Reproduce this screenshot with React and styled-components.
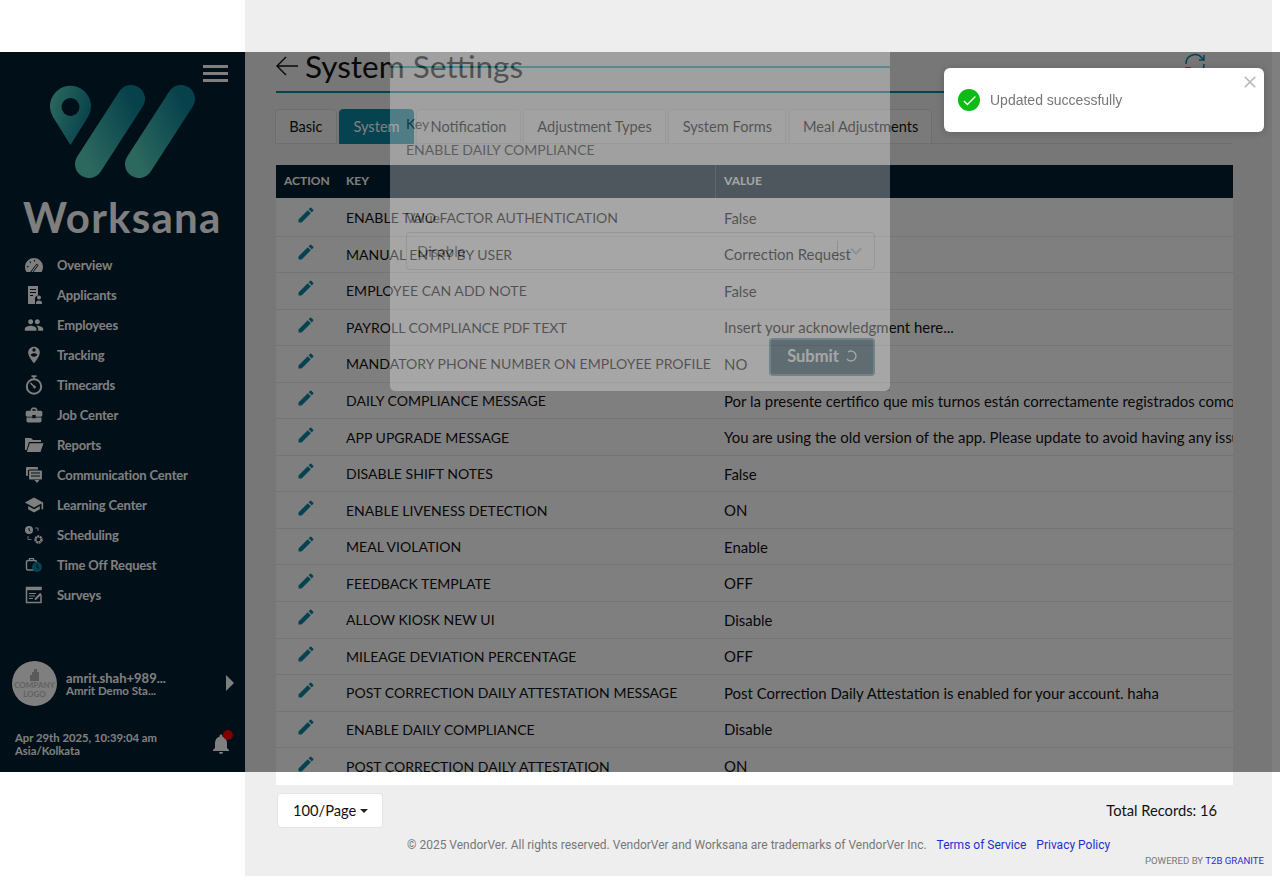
import React from 'react';
import styled, { createGlobalStyle } from 'styled-components';
import {
  MdPeople, MdPersonPinCircle, MdBusinessCenter, MdSchool, MdEdit, MdNotifications, MdCheck, MdClose,
} from 'react-icons/md';

const brand = '#0b86a3';
const navy = '#001e30';

const GlobalStyle = createGlobalStyle`
  html, body { margin: 0; padding: 0; background: #fff; overflow: hidden; }
  * { box-sizing: border-box; }
  body { font-family: Lato, "Liberation Sans", sans-serif; color: #111; }
`;

//Page shell
const Shell = styled.div`
  display: flex;
  width: 1272px;
  height: 884px;
  align-items: flex-start;
`;

//Sidebar
const Sidebar = styled.aside`
  width: 245px;
  height: 720px;
  margin-top: 52px;
  flex: none;
  background: ${navy};
  color: #fff;
  display: flex;
  flex-direction: column;
`;
const BurgerRow = styled.div`
  display: flex;
  justify-content: flex-end;
  padding: 13px 17px 0 0;
`;
const Burger = styled.div`
  width: 25px;
  height: 17px;
  border-top: 3px solid #fff;
  border-bottom: 3px solid #fff;
  display: flex;
  align-items: center;
  &::before { content: ''; display: block; width: 100%; height: 3px; background: #fff; }
`;
const LogoMark = styled.svg`
  display: block;
  width: 145px;
  height: 93px;
  margin: 3px 0 0 50px;
`;
const Wordmark = styled.div`
  font-size: 42px;
  line-height: 44px;
  font-weight: 700;
  letter-spacing: 1.25px;
  margin: 17px 0 0 23px;
`;
const Nav = styled.nav`
  margin-top: 11px;
  display: flex;
  flex-direction: column;
`;
const NavItem = styled.div`
  height: 30px;
  display: flex;
  align-items: center;
  padding-left: 24px;
  font-size: 13px;
  font-weight: 700;
  letter-spacing: -0.15px;
  svg { width: 20px; height: 20px; flex: none; margin-right: 13px; }
`;
const UserBox = styled.div`
  margin-top: auto;
  display: flex;
  align-items: center;
  padding: 0 11px 1px 12px;
  height: 46px;
`;
const Avatar = styled.div`
  width: 45px;
  height: 45px;
  border-radius: 50%;
  background: #fff;
  color: #c4c4c4;
  flex: none;
  display: flex;
  flex-direction: column;
  align-items: center;
  justify-content: center;
  font-size: 8px;
  font-weight: 700;
  line-height: 9px;
  text-align: center;
  svg { width: 12px; height: 12px; }
`;
const UserText = styled.div`
  margin-left: 9px;
  flex: 1;
  min-width: 0;
`;
const UserName = styled.div`
  font-size: 13px;
  font-weight: 700;
  line-height: 13px;
`;
const UserOrg = styled.div`
  font-size: 11.5px;
  font-weight: 700;
  line-height: 11px;
`;
const Caret = styled.div`
  width: 0;
  height: 0;
  margin-top: -2px;
  border-left: 8px solid #fff;
  border-top: 8px solid transparent;
  border-bottom: 8px solid transparent;
`;
const SideFooter = styled.div`
  display: flex;
  justify-content: space-between;
  align-items: center;
  padding: 24px 12px 15px 15px;
`;
const Clock = styled.div`
  font-size: 11.3px;
  font-weight: 700;
  line-height: 13px;
`;
const BellWrap = styled.div`
  position: relative;
  width: 24px;
  height: 24px;
  svg { width: 24px; height: 24px; display: block; }
  &::after {
    content: '';
    position: absolute;
    top: -2px;
    right: 0;
    width: 10px;
    height: 10px;
    border-radius: 50%;
    background: #ff0000;
  }
`;

//Main column
const Main = styled.main`
  width: 1027px;
  height: 876px;
  flex: none;
  background: #eee;
  padding: 52px 39px 0 31px;
`;
const TitleRow = styled.div`
  height: 41px;
  display: flex;
  align-items: flex-start;
  border-bottom: 2px solid ${brand};
  padding-right: 26px;
`;
const BackArrow = styled.svg`
  width: 22px;
  height: 20px;
  margin: 4px 7px 0 0;
  flex: none;
`;
const Title = styled.h1`
  flex: 1;
  margin: -5px 0 0;
  font-size: 31.5px;
  line-height: 38px;
  font-weight: 400;
`;
const Refresh = styled.svg`
  width: 24px;
  height: 24px;
`;
const Tabs = styled.div`
  display: flex;
  gap: 2.5px;
  margin: 16px 0 0 -1px;
  height: 35px;
  border-bottom: 1px solid #ddd;
`;
const Tab = styled.div`
  height: 35px;
  padding: 0 13.2px;
  display: flex;
  align-items: center;
  font-size: 14.6px;
  border: 1px solid ${(props) => (props.$active ? brand : '#ddd')};
  border-radius: 4px 4px 0 0;
  background: ${(props) => (props.$active ? brand : '#f4f4f4')};
  color: ${(props) => (props.$active ? '#fff' : '#111')};
`;
const TableWrap = styled.div`
  margin-top: 21px;
  height: 620px;
  background: #fff;
  overflow: hidden;
`;
const HeadRow = styled.div`
  display: grid;
  grid-template-columns: 62px 377px 1fr;
  height: 33px;
  background: ${navy};
  color: #fff;
  font-size: 12px;
  font-weight: 700;
  align-items: center;
`;
const HeadCell = styled.div`
  height: 100%;
  display: flex;
  align-items: center;
  padding: 0 0 2px ${(props) => props.$pad};
  border-left: ${(props) => (props.$line ? '1px solid #3a4b58' : 'none')};
`;
const Rows = styled.div`
  padding-top: 2px;
`;
const Row = styled.div`
  display: grid;
  grid-template-columns: 62px 378px 1fr;
  height: 36.55px;
  align-items: center;
  font-size: 14.95px;
  border-bottom: 1px solid #e9e9e9;
  white-space: nowrap;
  &:last-child { border-bottom: 0; }
`;
const EditCell = styled.div`
  display: flex;
  justify-content: center;
  color: ${brand};
  padding-right: 2px;
  svg { width: 20px; height: 20px; margin-top: -5px; }
`;
const KeyCell = styled.div`
  padding-left: 8px;
  font-size: 14.05px;
`;
const ValueCell = styled.div`
  padding-left: 8px;
  overflow: hidden;
`;
const Pager = styled.div`
  display: flex;
  justify-content: space-between;
  align-items: center;
  margin-top: 8px;
  padding: 0 16px 0 1px;
  height: 35px;
  font-size: 14.7px;
`;
const PageSize = styled.div`
  width: 106px;
  height: 35px;
  background: #fff;
  border: 1px solid #e4e4e4;
  border-radius: 4px;
  display: flex;
  align-items: center;
  padding: 0 0 2px 15px;
  &::after {
    content: '';
    margin: 2px 0 0 4px;
    border-top: 4px solid #222;
    border-left: 4px solid transparent;
    border-right: 4px solid transparent;
  }
`;
const TotalRecords = styled.span`
  padding-bottom: 2px;
`;
const FooterLine = styled.div`
  margin: 10px 0 0 131px;
  font-family: Roboto, sans-serif;
  font-size: 12px;
  line-height: 15px;
  color: #777;
  white-space: nowrap;
`;
const FootLink = styled.span`
  color: #1f2fd0;
  margin-left: ${(props) => props.$gap};
`;
const Powered = styled.div`
  font-family: Roboto, sans-serif;
  font-size: 9.6px;
  line-height: 12px;
  margin: 2px -31px 0 0;
  text-align: right;
  color: #777;
`;

//Backdrop, modal and toast sit over the page
const Backdrop = styled.div`
  position: fixed;
  top: 52px;
  left: 0;
  width: 1280px;
  height: 720px;
  background: rgba(0, 0, 0, 0.5);
  overflow: hidden;
  display: flex;
  justify-content: center;
  align-items: flex-start;
`;
const Modal = styled.div`
  width: 500px;
  height: 339px;
  background: #fff;
  opacity: 0.3;
  border-radius: 0 0 5px 5px;
  padding: 0 15px 0 16px;
  display: flex;
  flex-direction: column;
`;
const ModalHead = styled.div`
  height: 16px;
  margin: 0 -15px 0 -16px;
  border-bottom: 2px solid #10b2cf;
`;
const ModalLabel = styled.div`
  font-size: 14.05px;
  line-height: 18px;
  margin-top: ${(props) => props.$top};
  color: #222;
`;
const SelectBox = styled.div`
  height: 38px;
  margin-top: 5px;
  border: 1px solid #ccc;
  border-radius: 4px;
  display: flex;
  align-items: center;
  justify-content: space-between;
  padding-left: 10px;
  font-size: 15px;
  color: #333;
`;
const SelectArrow = styled.div`
  width: 37px;
  height: 21px;
  border-left: 1px solid #bbb;
  display: flex;
  align-items: center;
  justify-content: center;
  color: #bbb;
  svg { width: 14px; height: 14px; }
`;
const Submit = styled.button`
  align-self: flex-end;
  margin-top: 68px;
  width: 106px;
  height: 38px;
  border: 2px solid #4d8a9c;
  border-radius: 4px;
  background: #153f50;
  color: #fff;
  font: 700 16.5px Lato, sans-serif;
  display: flex;
  align-items: center;
  justify-content: center;
  gap: 6px;
  padding: 0 0 2px;
`;
const Spin = styled.svg`
  width: 12px;
  height: 12px;
`;
const Toast = styled.div`
  position: fixed;
  top: 68px;
  left: 944px;
  width: 320px;
  height: 64px;
  background: #fff;
  border-radius: 6px;
  box-shadow: 0 1px 10px rgba(0, 0, 0, 0.2);
  display: flex;
  align-items: center;
  padding-left: 14px;
  font-family: "Liberation Sans", Arial, sans-serif;
  font-size: 14px;
  color: #777;
`;
const ToastIcon = styled.div`
  width: 22px;
  height: 22px;
  border-radius: 50%;
  background: #0dbb16;
  color: #fff;
  margin-right: 10px;
  display: flex;
  align-items: center;
  justify-content: center;
  svg { width: 17px; height: 17px; }
`;
const ToastClose = styled.div`
  position: absolute;
  top: 4px;
  right: 4px;
  color: #bbb;
  svg { width: 20px; height: 20px; display: block; }
`;

//Sidebar icons drawn by hand, 20 box to match the react-icons ones
const Overview = () => (
  <svg viewBox="0 0 20 20">
    <path d="M2.5 17A9 9 0 1 1 17.5 17z" fill="#fff" />
    <path d="M7.5 17.5l6-8" stroke={navy} strokeWidth="2.6" />
    <path d="M8 17l5-7" stroke="#fff" strokeWidth="1.2" />
    <path d="M2.8 11.5l1.7.4M5.8 6.5l1 1.3M10.5 4.8v1.6" stroke={navy} strokeWidth="1.1" />
  </svg>
);
const Applicants = () => (
  <svg viewBox="0 0 20 20">
    <path d="M4 1h10v9.5a3.5 3.5 0 0 0-3 4.5v4H4z" fill="#fff" />
    <path d="M6 4.5h6M6 7.5h6M6 10.5h3" stroke={navy} strokeWidth="1.2" />
    <circle cx="15" cy="12.5" r="2" fill="#fff" />
    <path d="M12 19v-1.5c0-1.3 1.5-2 3-2s3 .7 3 2V19z" fill="#fff" />
  </svg>
);
const Timecards = () => (
  <svg viewBox="0 0 20 20" fill="none" stroke="#fff">
    <circle cx="10" cy="11.5" r="7.2" strokeWidth="2" />
    <path d="M7.5 1.2h5" strokeWidth="1.8" />
    <path d="M10 2v2" strokeWidth="1.6" />
    <path d="M6.5 8l4 4" strokeWidth="1.6" />
    <circle cx="10.5" cy="12" r="1" fill="#fff" />
  </svg>
);
const Reports = () => (
  <svg viewBox="0 0 20 20" fill="#fff">
    <path d="M1 3h6l2 2h8v2H5L2.5 15H1z" />
    <path d="M5.8 8.2H19.5L16.5 17H2.8z" />
  </svg>
);
const Communication = () => (
  <svg viewBox="0 0 20 20">
    <rect x="2" y="2" width="12" height="9" rx="1" fill="#fff" />
    <rect x="4.5" y="5" width="14" height="10" rx="1" fill="#fff" stroke={navy} strokeWidth="1.2" />
    <path d="M7 8h9M7 11h9" stroke={navy} strokeWidth="1.2" />
    <path d="M10.5 15h5l-2.5 3z" fill="#fff" />
  </svg>
);
const Scheduling = () => (
  <svg viewBox="0 0 20 20" fill="#fff">
    <circle cx="5" cy="5" r="4" />
    <path d="M5 3v2.3l1.5 1" stroke={navy} strokeWidth="1" fill="none" />
    <path d="M11 3h3v3M4 11v3.5h3.5" fill="none" stroke="#fff" strokeWidth="0.8" />
    <circle cx="14.5" cy="14.5" r="3" fill="none" stroke="#fff" strokeWidth="2.4" strokeDasharray="2 0.5" />
  </svg>
);
const TimeOff = () => (
  <svg viewBox="0 0 20 20">
    <rect x="2.5" y="5.5" width="10" height="9.5" rx="1.5" fill="none" stroke="#fff" strokeWidth="1.4" />
    <path d="M5.5 5.5V3.5h4v2" fill="none" stroke="#fff" strokeWidth="1.2" />
    <circle cx="13" cy="12" r="5" fill={brand} />
    <path d="M13 9.3V12l2 1.2" fill="none" stroke={navy} strokeWidth="1.1" />
  </svg>
);
const Surveys = () => (
  <svg viewBox="0 0 20 20" fill="none" stroke="#fff">
    <path d="M17 10v7.5H2.5v-15H17v2.5" strokeWidth="1.5" />
    <path d="M2.5 4h14.5" strokeWidth="2.4" />
    <path d="M5 8.5h7M5 11h6M5 13.5h4" strokeWidth="1.2" />
    <path d="M11 14.5l6-6" strokeWidth="2" />
  </svg>
);

const navItems = [
  ['Overview', Overview],
  ['Applicants', Applicants],
  ['Employees', MdPeople],
  ['Tracking', MdPersonPinCircle],
  ['Timecards', Timecards],
  ['Job Center', MdBusinessCenter],
  ['Reports', Reports],
  ['Communication Center', Communication],
  ['Learning Center', MdSchool],
  ['Scheduling', Scheduling],
  ['Time Off Request', TimeOff],
  ['Surveys', Surveys],
];

const rows = [
  ['ENABLE TWO FACTOR AUTHENTICATION', 'False'],
  ['MANUAL ENTRY BY USER', 'Correction Request'],
  ['EMPLOYEE CAN ADD NOTE', 'False'],
  ['PAYROLL COMPLIANCE PDF TEXT', 'Insert your acknowledgment here...'],
  ['MANDATORY PHONE NUMBER ON EMPLOYEE PROFILE', 'NO'],
  ['DAILY COMPLIANCE MESSAGE', 'Por la presente certifico que mis turnos están correctamente registrados como trabajados en el sistema'],
  ['APP UPGRADE MESSAGE', 'You are using the old version of the app. Please update to avoid having any issues with the application'],
  ['DISABLE SHIFT NOTES', 'False'],
  ['ENABLE LIVENESS DETECTION', 'ON'],
  ['MEAL VIOLATION', 'Enable'],
  ['FEEDBACK TEMPLATE', 'OFF'],
  ['ALLOW KIOSK NEW UI', 'Disable'],
  ['MILEAGE DEVIATION PERCENTAGE', 'OFF'],
  ['POST CORRECTION DAILY ATTESTATION MESSAGE', 'Post Correction Daily Attestation is enabled for your account. haha'],
  ['ENABLE DAILY COMPLIANCE', 'Disable'],
  ['POST CORRECTION DAILY ATTESTATION', 'ON'],
];

const tabs = ['Notification', 'Adjustment Types', 'System Forms', 'Meal Adjustments'];

export default function App() {
  return (
    <>
      <GlobalStyle />
      <Shell>
        <Sidebar>
          <BurgerRow><Burger /></BurgerRow>
          <LogoMark viewBox="0 0 145 93" fill="none">
            <defs>
              <linearGradient id="pinFill" x1="0" y1="0.2" x2="1" y2="0.6">
                <stop offset="0" stopColor="#58d0bc" />
                <stop offset="1" stopColor="#0c8298" />
              </linearGradient>
              <linearGradient id="pillA" gradientUnits="userSpaceOnUse" x1="30" y1="60" x2="92" y2="30">
                <stop offset="0" stopColor="#58d0bc" />
                <stop offset="1" stopColor="#0c8298" />
              </linearGradient>
              <linearGradient id="pillB" gradientUnits="userSpaceOnUse" x1="80" y1="60" x2="142" y2="30">
                <stop offset="0" stopColor="#58d0bc" />
                <stop offset="1" stopColor="#0c8298" />
              </linearGradient>
            </defs>
            <path d="M20.5 60 L3 32 A20.5 20.5 0 1 1 38 32 Z" fill="url(#pinFill)" />
            <circle cx="20.5" cy="22" r="9" fill={navy} />
            <path d="M81 14 L39 79" stroke="url(#pillA)" strokeWidth="28" strokeLinecap="round" />
            <path d="M131 14 L89 79" stroke="url(#pillB)" strokeWidth="28" strokeLinecap="round" />
          </LogoMark>
          <Wordmark>Worksana</Wordmark>
          <Nav>
            {navItems.map(([label, Icon]) => (
              <NavItem key={label}><Icon />{label}</NavItem>
            ))}
          </Nav>
          <UserBox>
            <Avatar>
              <svg viewBox="0 0 12 12" fill="#b5b5b5"><path d="M1 12V6h2V3h2V0h3v3h2v9z" /></svg>
              <span>COMPANY</span>
              <span>LOGO</span>
            </Avatar>
            <UserText>
              <UserName>amrit.shah+989...</UserName>
              <UserOrg>Amrit Demo Sta...</UserOrg>
            </UserText>
            <Caret />
          </UserBox>
          <SideFooter>
            <Clock>Apr 29th 2025, 10:39:04 am<br />Asia/Kolkata</Clock>
            <BellWrap><MdNotifications /></BellWrap>
          </SideFooter>
        </Sidebar>
        <Main>
          <TitleRow>
            <BackArrow viewBox="0 0 22 20" fill="none" stroke="#111" strokeWidth="1.4">
              <path d="M22 10H1M10 1l-9 9 9 9" />
            </BackArrow>
            <Title>System Settings</Title>
            <Refresh viewBox="0 0 24 24" fill="none" stroke={brand} strokeWidth="1.5">
              <path d="M3 12a9 9 0 0 1 16-6l2 2M21 3v5h-5M21 12a9 9 0 0 1-16 6l-2-2M3 21v-5h5" />
            </Refresh>
          </TitleRow>
          <Tabs>
            <Tab>Basic</Tab>
            <Tab $active>System</Tab>
            {tabs.map((t) => <Tab key={t}>{t}</Tab>)}
          </Tabs>
          <TableWrap>
            <HeadRow>
              <HeadCell $pad="8px">ACTION</HeadCell>
              <HeadCell $pad="8px">KEY</HeadCell>
              <HeadCell $pad="8px" $line>VALUE</HeadCell>
            </HeadRow>
            <Rows>
              {rows.map(([k, v]) => (
                <Row key={k}>
                  <EditCell><MdEdit /></EditCell>
                  <KeyCell>{k}</KeyCell>
                  <ValueCell>{v}</ValueCell>
                </Row>
              ))}
            </Rows>
          </TableWrap>
          <Pager>
            <PageSize>100/Page</PageSize>
            <TotalRecords>Total Records: 16</TotalRecords>
          </Pager>
          <FooterLine>
            © 2025 VendorVer. All rights reserved. VendorVer and Worksana are trademarks of VendorVer Inc.
            <FootLink $gap="10px">Terms of Service</FootLink>
            <FootLink $gap="10px">Privacy Policy</FootLink>
          </FooterLine>
          <Powered>POWERED BY <FootLink>T2B GRANITE</FootLink></Powered>
        </Main>
      </Shell>
      <Backdrop>
        <Modal>
          <ModalHead />
          <ModalLabel $top="47px">Key</ModalLabel>
          <ModalLabel $top="8px">ENABLE DAILY COMPLIANCE</ModalLabel>
          <ModalLabel $top="50px">Value</ModalLabel>
          <SelectBox>
            Disable
            <SelectArrow>
              <svg viewBox="0 0 14 14" fill="none" stroke="currentColor" strokeWidth="2"><path d="M2 4.5l5 5 5-5" /></svg>
            </SelectArrow>
          </SelectBox>
          <Submit>
            Submit
            <Spin viewBox="0 0 12 12" fill="none" stroke="#fff" strokeWidth="1.3">
              <path d="M3 2a5 5 0 1 1-1 7" />
            </Spin>
          </Submit>
        </Modal>
      </Backdrop>
      <Toast>
        <ToastIcon><MdCheck /></ToastIcon>
        Updated successfully
        <ToastClose><MdClose /></ToastClose>
      </Toast>
    </>
  );
}
